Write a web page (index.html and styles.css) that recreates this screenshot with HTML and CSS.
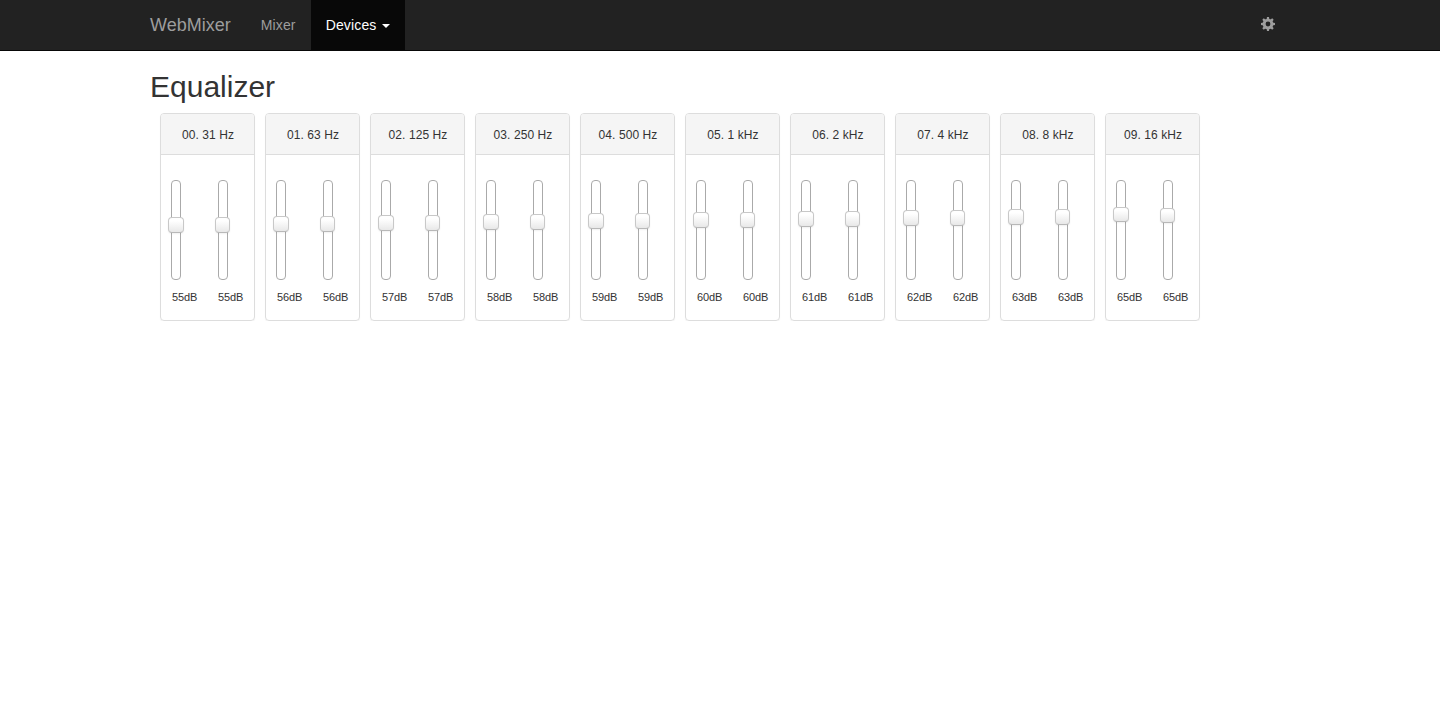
FILE: index.html
```html
<!DOCTYPE html>
<html lang="en">
<head>
<meta charset="utf-8">
<title>WebMixer</title>
<link rel="stylesheet" href="styles.css">
</head>
<body>
<nav class="navbar">
  <div class="container nav-row">
    <a class="brand">WebMixer</a>
    <a class="nav-link">Mixer</a>
    <a class="nav-link active">Devices<span class="caret"></span></a>
    <a class="settings" aria-label="Settings">
      <svg width="14" height="14" viewBox="0 0 14 14"><g fill="#9d9d9d"><path id="tooth" d="M5.6 2.5 6 0h2l.4 2.5v9L8 14H6l-.4-2.5z"/><use href="#tooth" transform="rotate(45 7 7)"/><use href="#tooth" transform="rotate(90 7 7)"/><use href="#tooth" transform="rotate(135 7 7)"/><circle cx="7" cy="7" r="5.3"/></g><circle cx="7" cy="7" r="2.4" fill="#222"/></svg>
    </a>
  </div>
</nav>
<main class="container">
  <h1>Equalizer</h1>
  <div class="bands" id="bands"></div>
</main>
<script src="app.js"></script>
</body>
</html>
```
FILE: styles.css
```css
* { box-sizing: border-box; }
body {
  margin: 0;
  background: #fff;
  color: #333;
  font: 14px/20px "Liberation Sans", Arial, sans-serif;
}
.container { width: 1140px; margin: 0 auto; }
.navbar { height: 51px; background: #222; border-bottom: 1px solid #080808; }
.nav-row { display: flex; height: 50px; }
.brand { padding: 15px 15px 15px 0; font-size: 18px; color: #9d9d9d; }
.nav-link { padding: 15px; color: #9d9d9d; letter-spacing: .15px; }
.nav-link.active { background: #080808; color: #fff; }
.caret {
  display: inline-block;
  margin-left: 5px;
  vertical-align: middle;
  border-top: 4px solid;
  border-left: 4px solid transparent;
  border-right: 4px solid transparent;
}
.settings { margin-left: auto; padding: 17px 15px 0; }
.settings svg { display: block; }
h1 { margin: 20px 0 10px; font-size: 30px; line-height: 32px; font-weight: 400; }
.bands { display: flex; gap: 10px; padding-left: 10px; }
.band {
  width: 95px;
  height: 208px;
  border: 1px solid #ddd;
  border-radius: 4px;
  box-shadow: 0 1px 1px rgba(0, 0, 0, .05);
}
.band-title {
  height: 41px;
  padding-left: 1px;
  background: #f5f5f5;
  border-bottom: 1px solid #ddd;
  border-radius: 3px 3px 0 0;
  font-size: 12px;
  line-height: 42px;
  letter-spacing: .08px;
  text-align: center;
}
.channels { display: grid; grid-template-columns: 47px 35px; padding: 25px 0 0 10px; }
.track {
  position: relative;
  width: 10px;
  height: 100px;
  border: 1px solid #aaa;
  border-radius: 4px;
}
.knob {
  position: absolute;
  left: -4px;
  width: 16px;
  height: 16px;
  border: 1px solid #c8c8c8;
  border-bottom-color: #b8b8b8;
  border-radius: 4px;
  background: linear-gradient(#fff 20%, #e8e8e8);
  box-shadow: 0 1px 2px rgba(0, 0, 0, .06);
}
.channel:last-child .knob { width: 15px; }
.band:last-child .knob { height: 15px; }
.level { margin: 9px 0 0 1px; font-size: 11px; line-height: 16px; letter-spacing: -.1px; }
.channel:last-child .level { margin-left: 0; }
```
FILE: app.js
```js
const bands = [
  ["00. 31 Hz", 55, 36, 36], ["01. 63 Hz", 56, 35, 35],
  ["02. 125 Hz", 57, 34, 34], ["03. 250 Hz", 58, 33, 33],
  ["04. 500 Hz", 59, 32, 32], ["05. 1 kHz", 60, 31, 31],
  ["06. 2 kHz", 61, 30, 30], ["07. 4 kHz", 62, 29, 29],
  ["08. 8 kHz", 63, 28, 28], ["09. 16 kHz", 65, 26, 27]
];
const channel = (level, top) =>
  `<div class="channel"><div class="track"><div class="knob" style="top:${top}px"></div></div><div class="level">${level}dB</div></div>`;
document.getElementById("bands").innerHTML = bands.map(([name, level, left, right]) =>
  `<section class="band"><div class="band-title">${name}</div><div class="channels">${channel(level, left)}${channel(level, right)}</div></section>`
).join("");
```
